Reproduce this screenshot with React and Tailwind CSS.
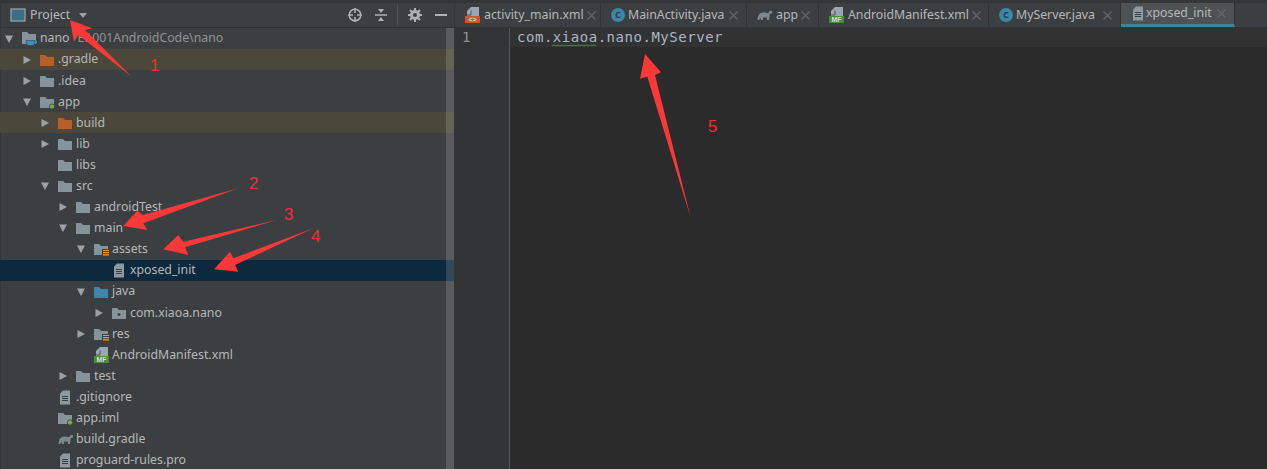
import React from "react";

const FolderIcon = ({ color = "#87939a", badge }) => (
  <svg width="16" height="14" viewBox="0 0 16 14" className="shrink-0">
    <path d="M0 2h5l2 2h7v9H0z" fill={color} />
    {badge === "dot" && (
      <circle cx="12" cy="11.500" r="2.600" fill="#6cb33f" stroke="#3c3f41" strokeWidth="0.800" />
    )}
    {badge === "res" && (
      <g>
        <rect x="8" y="7" width="8" height="7" fill="#3c3f41" />
        <path d="M9 8.500h6M9 10.700h6M9 12.900h6" stroke="#e9a32c" strokeWidth="1.200" />
      </g>
    )}
    {badge === "pkg" && <circle cx="7" cy="8.500" r="1.500" fill="#3c3f41" />}
  </svg>
);

const ModuleIcon = () => (
  <svg width="16" height="16" viewBox="0 0 16 16" className="shrink-0">
    <path d="M0 1h5l2 2h7v10H0z" fill="#87939a" />
    <path d="M4 9.500h9v2a3 3 0 0 1-3 3H7a3 3 0 0 1-3-3z" fill="#3592c4" stroke="#3c3f41" strokeWidth="0.600" />
    <path d="M13 10h1.500v2H13" fill="none" stroke="#3592c4" />
  </svg>
);

const FileIcon = () => (
  <svg width="12" height="15" viewBox="0 0 12 15" className="shrink-0">
    <path d="M5 0.500h7v14H2V3.500z" fill="#8d999f" />
    <path d="M4 6.500h6M4 8.500h6M4 10.500h6" stroke="#3c3f41" strokeWidth="1" />
  </svg>
);

const GradleIcon = ({ size = 16 }) => (
  <svg width={size} height={size * 0.75} viewBox="0 0 16 12" className="shrink-0">
    <path
      d="M0.500 11c0-4 2-7.500 6-7.500 2.500 0 3.500 1 5 .5 .5-1.500 1.500-2.500 3-2 1 .5 1 1.500 .3 2.200-1 .8-1.500 .3-2 1-.5 1-.3 3.500-.8 5.800h-2l-.3-2.500h-3.500l-.4 2.500h-2l-.3-2.300-1.500 2.300z"
      fill="#7d888e"
    />
  </svg>
);

// xml / manifest file: sheet with a coloured label across the bottom
const LabelIcon = ({ color, text }) => (
  <svg width="16" height="16" viewBox="0 0 16 16" className="shrink-0">
    <path d="M6 0h8v9H2V4z" fill="#9aa7b0" />
    <path d="M6 3.500V8H2" fill="none" stroke="#3c3f41" strokeWidth="0.800" />
    <rect x="0" y="9" width="15" height="7" fill={color} />
    <text x="7.500" y="15" textAnchor="middle" fontSize="7" fontWeight="700" fill="#d8dcd8" fontFamily="Liberation Sans, sans-serif">
      {text}
    </text>
  </svg>
);

const ClassIcon = () => (
  <span className="w-[14px] h-[14px] rounded-full bg-[#3b87a5] text-[#23414f] text-[9px] font-bold flex items-center justify-center shrink-0">
    C
  </span>
);

const Caret = ({ open }) => (
  <svg width="10" height="10" viewBox="0 0 10 10" className="shrink-0">
    {open ? <path d="M1 1.500h8L5 9z" fill="#9da1a4" /> : <path d="M1.500 1l7.500 4-7.500 4z" fill="#9da1a4" />}
  </svg>
);

const CloseIcon = () => (
  <svg width="9" height="9" viewBox="0 0 9 9" className="ml-auto mr-[8px] shrink-0">
    <path d="M0.500 0.500l8 8M8.500 0.500l-8 8" stroke="#65696b" strokeWidth="1.100" />
  </svg>
);

const rows = [
  { d: 0, open: true, icon: <ModuleIcon />, label: "nano", extra: "E:\\001AndroidCode\\nano" },
  { d: 1, open: false, icon: <FolderIcon color="#b75e29" />, label: ".gradle", ignored: true },
  { d: 1, open: false, icon: <FolderIcon />, label: ".idea" },
  { d: 1, open: true, icon: <FolderIcon badge="dot" />, label: "app" },
  { d: 2, open: false, icon: <FolderIcon color="#b75e29" />, label: "build", ignored: true },
  { d: 2, open: false, icon: <FolderIcon />, label: "lib" },
  { d: 2, icon: <FolderIcon />, label: "libs" },
  { d: 2, open: true, icon: <FolderIcon />, label: "src" },
  { d: 3, open: false, icon: <FolderIcon />, label: "androidTest" },
  { d: 3, open: true, icon: <FolderIcon />, label: "main" },
  { d: 4, open: true, icon: <FolderIcon badge="res" />, label: "assets" },
  { d: 5, icon: <FileIcon />, label: "xposed_init", selected: true },
  { d: 4, open: true, icon: <FolderIcon color="#3d88a8" />, label: "java" },
  { d: 5, open: false, icon: <FolderIcon badge="pkg" />, label: "com.xiaoa.nano" },
  { d: 4, open: false, icon: <FolderIcon badge="res" />, label: "res" },
  { d: 4, icon: <LabelIcon color="#4b8b3b" text="MF" />, label: "AndroidManifest.xml" },
  { d: 3, open: false, icon: <FolderIcon />, label: "test" },
  { d: 2, icon: <FileIcon />, label: ".gitignore" },
  { d: 2, icon: <FolderIcon badge="dot" />, label: "app.iml" },
  { d: 2, icon: <GradleIcon />, label: "build.gradle" },
  { d: 2, icon: <FileIcon />, label: "proguard-rules.pro" },
];

const tabs = [
  { w: "w-[146px]", icon: <LabelIcon color="#c75a26" text="<>" />, label: "activity_main.xml" },
  { w: "w-[146px]", icon: <ClassIcon />, label: "MainActivity.java" },
  { w: "w-[72px]", icon: <GradleIcon />, label: "app" },
  { w: "w-[170px]", icon: <LabelIcon color="#4b8b3b" text="MF" />, label: "AndroidManifest.xml" },
  { w: "w-[132px]", icon: <ClassIcon />, label: "MyServer.java" },
  { w: "w-[114px]", icon: <FileIcon />, label: "xposed_init", active: true },
];

const Row = ({ d, open, icon, label, extra, ignored, selected }) => (
  <div
    className={`h-[21.1px] flex items-center ${selected ? "bg-[#0d293e]" : ignored ? "bg-[#4b473b]" : ""}`}
    style={{ paddingLeft: 4 + d * 18 }}
  >
    <div className="w-[18px] flex items-center">{open !== undefined && <Caret open={open} />}</div>
    <div className="w-[18px] flex items-center">{icon}</div>
    <span className="text-[#b4b8ba]">{label}</span>
    {extra && <span className="ml-[8px] text-[#8f9396]">{extra}</span>}
  </div>
);

const Tab = ({ w, icon, label, active }) => (
  <div
    className={`${w} h-full flex items-center pl-[10px] gap-[3px] border-r border-[#323232] ${
      active ? "bg-[#4e5254] border-b-[3px] border-b-[#4083a0]" : ""
    }`}
  >
    {icon}
    <span className="text-[#b4b8ba]">{label}</span>
    <CloseIcon />
  </div>
);

const Marker = ({ x, y, n }) => (
  <span
    className="absolute text-[#f03030] text-[17px] leading-none font-['Liberation_Sans',sans-serif]"
    style={{ left: x, top: y }}
  >
    {n}
  </span>
);

export default function App() {
  return (
    <div className="relative w-[1267px] h-[469px] overflow-hidden bg-[#2b2b2b] font-['Noto_Sans',sans-serif] text-[12.300px]">
      <div className="flex h-full">
        {/* project panel */}
        <div className="w-[455px] h-full bg-[#3c3f41] flex flex-col border-t-[3px] border-l border-r border-[#343638] shrink-0">
          <div className="h-[25px] flex items-center border-b border-[#323232] shrink-0">
            <svg width="16" height="14" viewBox="0 0 16 14" className="ml-[9px]">
              <rect x="1" y="1" width="14" height="12" fill="#3b6e85" stroke="#9aa7b0" strokeWidth="1.200" />
            </svg>
            <span className="ml-[4px] text-[#b4b8ba]">Project</span>
            <svg width="10" height="7" viewBox="0 0 10 7" className="ml-[8px]">
              <path d="M1 1h8L5 6z" fill="#9da1a4" />
            </svg>
            <div className="ml-auto flex items-center pr-[7px]">
              <svg width="16" height="16" viewBox="0 0 16 16">
                <circle cx="8" cy="8" r="5.800" fill="none" stroke="#aeb2b4" strokeWidth="1.500" />
                <path d="M8 1v5M8 10v5M1 8h5M10 8h5" stroke="#aeb2b4" strokeWidth="1.500" />
              </svg>
              <svg width="14" height="14" viewBox="0 0 14 14" className="ml-[11px]">
                <path d="M1 7h12" stroke="#aeb2b4" strokeWidth="1.500" />
                <path d="M4 1h6L7 5zM4 13h6L7 9z" fill="#aeb2b4" />
              </svg>
              <div className="w-px h-[20px] bg-[#555] ml-[9px]" />
              <svg width="14" height="14" viewBox="0 0 14 14" className="ml-[10px]">
                <circle cx="7" cy="7" r="3.500" fill="none" stroke="#aeb2b4" strokeWidth="3" />
                <path d="M7 0v3M7 11v3M0 7h3M11 7h3M2 2l2 2M10 10l2 2M12 2l-2 2M4 10l-2 2" stroke="#aeb2b4" strokeWidth="2" />
              </svg>
              <div className="w-[12px] h-[2px] bg-[#aeb2b4] ml-[13px]" />
            </div>
          </div>
          <div className="flex-1 min-h-0 overflow-hidden -ml-px">
            {rows.map((r) => (
              <Row key={r.label} {...r} />
            ))}
          </div>
        </div>

        {/* editor */}
        <div className="flex-1 flex flex-col min-w-0">
          <div className="h-[28px] bg-[#3c3f41] border-t-[3px] border-[#343638] border-b border-b-[#323232] flex items-center shrink-0">
            {tabs.map((t) => (
              <Tab key={t.label} {...t} />
            ))}
          </div>
          <div className="flex-1 flex min-h-0">
            <div className="w-[55px] bg-[#313335] border-r border-[#555] text-[#8a9199] font-['DejaVu_Sans_Mono',monospace] text-[14px] pl-[7px] leading-[19px]">
              1
            </div>
            <div className="flex-1">
              <div className="relative h-[19px] bg-[#323232] pl-[7px] font-['DejaVu_Sans_Mono',monospace] text-[14px] tracking-[0.530px] text-[#a9b7c6] leading-[19px]">
                com.xiaoa.nano.MyServer
                <svg width="46" height="3" viewBox="0 0 46 3" className="absolute left-[42px] top-[16px]">
                  <path
                    d="M0 2l2-1 2 1 2-1 2 1 2-1 2 1 2-1 2 1 2-1 2 1 2-1 2 1 2-1 2 1 2-1 2 1 2-1 2 1 2-1 2 1 2-1 2 1"
                    fill="none"
                    stroke="#4f8a4f"
                    strokeWidth="1"
                  />
                </svg>
              </div>
            </div>
          </div>
        </div>
      </div>

      {/* scrollbar */}
      <div className="absolute left-[446px] top-[28px] bottom-0 w-[8px] bg-white/15" />

      {/* red annotations */}
      <svg width="1267" height="469" viewBox="0 0 1267 469" className="absolute inset-0 pointer-events-none">
        <g fill="#f93838">
          <path d="M70 20L92.700 28.300L85 30L131.700 76.700L78.300 35L74 41.700z" />
          <path d="M123.300 226L137.300 210.700L142.700 215L238.300 188.300L143.300 223.300L147.300 230z" />
          <path d="M163.300 249.300L178.300 235L183.300 241.700L276.700 220L185 247.300L188.300 255z" />
          <path d="M214 269.300L230 251.700L233.300 258.300L313.300 228.300L235 265L238.300 271.700z" />
          <path d="M645 54L661 72.300L655 75L690.700 217.700L647.300 76.700L640 78.700z" />
        </g>
      </svg>
      <Marker x={150} y={57} n="1" />
      <Marker x={249} y={175} n="2" />
      <Marker x={284} y={206} n="3" />
      <Marker x={311} y={228} n="4" />
      <Marker x={708} y={118} n="5" />
    </div>
  );
}
